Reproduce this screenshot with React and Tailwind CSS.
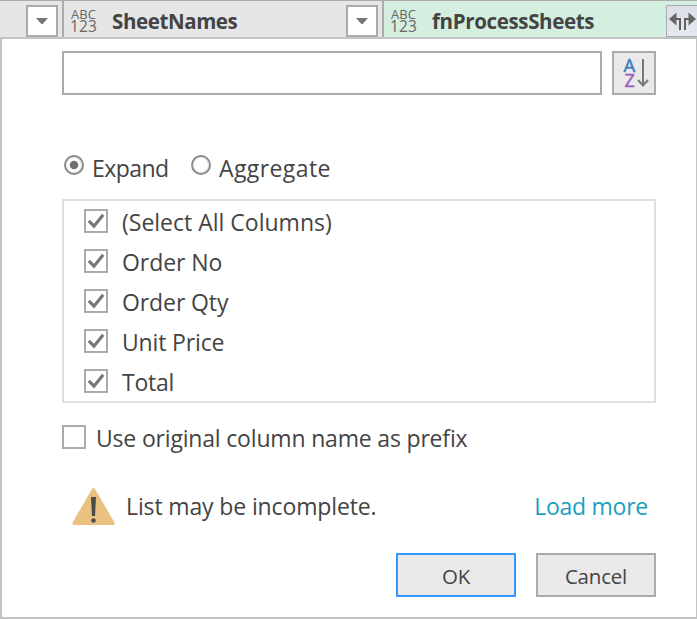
const columns = [
  { name: "(Select All Columns)", tracking: "tracking-[0px]" },
  { name: "Order No", tracking: "tracking-[-0.05px]" },
  { name: "Order Qty", tracking: "tracking-[-0.1px]" },
  { name: "Unit Price", tracking: "tracking-[-0.15px]" },
  { name: "Total", tracking: "tracking-[-0.25px]" },
];

function DropdownButton() {
  return (
    <button className="flex h-8 w-8 shrink-0 items-center justify-center border-2 border-[#ababab] bg-white">
      <svg width="12" height="6" viewBox="0 0 12 6">
        <path d="M0 0H12L6.6 6H5.4Z" fill="#777" />
      </svg>
    </button>
  );
}

function AnyTypeIcon() {
  return (
    <span className="flex w-[27px] shrink-0 flex-col items-start font-['Open_Sans',sans-serif] text-[#666]">
      <span className="h-[11px] pl-px text-[13px] leading-[10px] tracking-[0.1px]">ABC</span>
      <span className="h-[13px] text-[15.5px] leading-[12px] tracking-[0.1px]">123</span>
    </span>
  );
}

function Checkbox({ checked }) {
  return (
    <span className="flex h-6 w-6 shrink-0 items-center justify-center border-2 border-[#ababab] bg-white">
      {checked && (
        <svg width="20" height="20" viewBox="0 0 20 20" fill="none">
          <path d="M2.8 9.8L8 15.2L17.2 3.8" stroke="#777" strokeWidth="3.1" />
        </svg>
      )}
    </span>
  );
}

function Radio({ selected }) {
  return (
    <svg className="shrink-0" width="20" height="20" viewBox="0 0 20 20">
      <circle cx="10" cy="10" r="8" fill="#fff" stroke="#dedede" strokeWidth="2" />
      <circle cx="10" cy="10" r="9.1" fill="none" stroke="#858585" strokeWidth="1.7" />
      {selected && <circle cx="10" cy="10" r="4.3" fill="#707070" />}
    </svg>
  );
}

export default function App() {
  return (
    <div className="flex h-[619px] w-[697px] flex-col overflow-hidden bg-white font-['Open_Sans','Noto_Sans',sans-serif] text-[23px] text-[#444] whitespace-nowrap">
      <header className="flex h-[37px] shrink-0 border-t border-[#ababab] bg-[#e6e6e6]">
        <div className="flex w-16 shrink-0 border-r-2 border-[#ababab] pt-1 pl-[26px]">
          <DropdownButton />
        </div>
        <div className="flex w-80 shrink-0 border-r-2 border-[#ababab] pt-1 pl-[6px]">
          <span className="pt-1"><AnyTypeIcon /></span>
          <span className="ml-[15px] w-[234px] text-[20.5px] leading-[32px] font-bold tracking-[-0.4px]">SheetNames</span>
          <DropdownButton />
        </div>
        <div className="flex min-w-0 grow bg-[#d4efdf] pt-1 pl-[6px]">
          <span className="pt-1"><AnyTypeIcon /></span>
          <span className="ml-[15px] w-[234px] shrink-0 text-[20.5px] leading-[32px] font-bold tracking-[-0.35px]">fnProcessSheets</span>
          <button className="flex h-8 w-[31px] shrink-0 items-center justify-center border border-r-0 border-[#a5acb5] bg-gradient-to-b from-[#dcdfe7] to-[#e5e8ee]">
            <svg width="27" height="20" viewBox="0 0 27 20">
              <path d="M0 8L7.5 1.5V14.5ZM27 8L19.5 1.5V14.5Z" fill="#666" />
              <path d="M6 8H11V19M21 8H16V19" fill="none" stroke="#606060" strokeWidth="2" />
            </svg>
          </button>
        </div>
      </header>

      <main className="flex grow flex-col border-2 border-r border-[#c3c3c3] pr-10 pl-[60px]">
        <div className="mt-3 flex h-11 shrink-0 gap-[10px]">
          <input className="h-11 w-[540px] border-2 border-[#ababab] bg-white px-2 outline-none" />
          <button className="flex h-11 w-11 shrink-0 items-center justify-center border-2 border-[#ababab] bg-[#e9e9e9]">
            <svg width="40" height="40" viewBox="0 0 40 40">
              <text x="9.5" y="19" fontFamily="Open Sans" fontSize="18.5" fill="#3c7fc0" stroke="#3c7fc0" strokeWidth=".5">A</text>
              <text x="10.5" y="34" fontFamily="Open Sans" fontSize="18" fill="#9b62c0" stroke="#9b62c0" strokeWidth=".5">Z</text>
              <path d="M29 6V32M24 27L29 32.5L34 27" fill="none" stroke="#777" strokeWidth="2" />
            </svg>
          </button>
        </div>

        <div className="mt-[53px] flex h-10 shrink-0 pl-[2px]">
          <label className="flex w-[127px]">
            <span className="pt-[7px]"><Radio selected /></span>
            <span className="pl-[8px] leading-10 tracking-[-0.55px]">Expand</span>
          </label>
          <label className="flex">
            <span className="pt-[7px]"><Radio /></span>
            <span className="pl-[8px] leading-10 tracking-[0.4px]">Aggregate</span>
          </label>
        </div>

        <ul className="mt-[11px] h-[204px] shrink-0 border-2 border-[#dce0e4] pt-[1px] pl-5">
          {columns.map(({ name, tracking }) => (
            <li key={name} className="flex h-10">
              <span className="pt-[7px]"><Checkbox checked /></span>
              <span className={`pl-[14px] leading-10 ${tracking}`}>{name}</span>
            </li>
          ))}
        </ul>

        <label className="mt-[15px] flex h-10 shrink-0">
          <span className="pt-[7px]"><Checkbox /></span>
          <span className="pl-[10px] leading-10 tracking-[-0.18px]">Use original column name as prefix</span>
        </label>

        <div className="mt-[28px] flex h-10 shrink-0 pr-2 pl-[10px]">
          <svg className="mt-[2px] shrink-0" width="43" height="37" viewBox="0 0 43 37">
            <path d="M20 1Q21.5-1 23 1L42.5 34.5Q43 37 41 37H2Q0 37 .5 34.5Z" fill="#e9c282" />
            <path d="M19 9H24L23 28H20Z" fill="#4b4b4b" />
            <circle cx="21.5" cy="32.5" r="2.3" fill="#4b4b4b" />
          </svg>
          <span className="pl-[11px] leading-10 tracking-[-0.13px]">List may be incomplete.</span>
          <a className="ml-auto leading-10 tracking-[-0.25px] text-[#1a9fbf]">Load more</a>
        </div>

        <div className="mt-[27px] flex h-11 shrink-0 justify-end gap-5 text-[20.5px] tracking-[-0.2px]">
          <button className="flex h-11 w-[120px] items-center justify-center border-2 border-[#3399ff] bg-[#e9e9e9] pt-[2px]">OK</button>
          <button className="flex h-11 w-[120px] items-center justify-center border-2 border-[#ababab] bg-[#e9e9e9] pt-[2px]">Cancel</button>
        </div>
      </main>
    </div>
  );
}
